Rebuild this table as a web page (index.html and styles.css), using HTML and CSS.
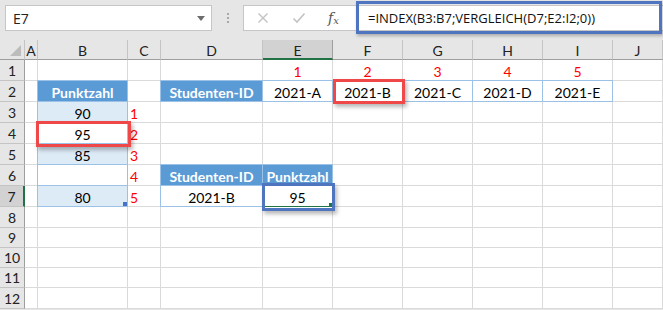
FILE: index.html
```html
<!DOCTYPE html>
<html lang="de">
<head>
<meta charset="utf-8">
<title>Mappe1 - Excel</title>
<link rel="stylesheet" href="styles.css">
</head>
<body>
<div class="app">
  <div class="toolbar">
    <div class="namebox">
      <span class="name">E7</span>
      <span class="caret"></span>
    </div>
    <div class="grip"><i></i><i></i><i></i></div>
    <div class="fxbox">
      <svg class="ico" width="12" height="12" viewBox="0 0 12 12"><path d="M1.5 1.5L10.5 10.5M10.5 1.5L1.5 10.5" stroke="#c2c2c2" stroke-width="1.4" fill="none"/></svg>
      <svg class="ico" width="14" height="12" viewBox="0 0 14 12"><path d="M1.5 6.5L5 10L12.5 1.5" stroke="#c2c2c2" stroke-width="1.6" fill="none"/></svg>
      <span class="fx">f<sub>x</sub></span>
    </div>
    <div class="formula">=INDEX(B3:B7;VERGLEICH(D7;E2:I2;0))</div>
    <div class="hl-formula"></div>
  </div>

  <div class="sheet">
    <!-- column headings -->
    <div class="corner"><span class="tri"></span></div>
    <div class="ch">A</div><div class="ch">B</div><div class="ch">C</div><div class="ch">D</div>
    <div class="ch sel">E</div><div class="ch">F</div><div class="ch">G</div><div class="ch">H</div><div class="ch">I</div><div class="ch">J</div>

    <!-- row 1: position numbers above the ID row -->
    <div class="rh">1</div>
    <div class="c"></div><div class="c"></div><div class="c"></div><div class="c"></div>
    <div class="c pos">1</div><div class="c pos">2</div><div class="c pos">3</div><div class="c pos">4</div><div class="c pos">5</div><div class="c"></div>

    <!-- row 2 -->
    <div class="rh">2</div>
    <div class="c"></div>
    <div class="c t hd">Punktzahl</div>
    <div class="c"></div>
    <div class="c t hd">Studenten-ID</div>
    <div class="c t">2021-A</div><div class="c t">2021-B</div><div class="c t">2021-C</div><div class="c t">2021-D</div><div class="c t">2021-E</div>
    <div class="c"></div>

    <!-- row 3 -->
    <div class="rh">3</div>
    <div class="c"></div><div class="c t band">90</div><div class="c idx">1</div>
    <div class="c"></div><div class="c"></div><div class="c"></div><div class="c"></div><div class="c"></div><div class="c"></div><div class="c"></div>

    <!-- row 4 -->
    <div class="rh">4</div>
    <div class="c"></div><div class="c t">95</div><div class="c idx">2</div>
    <div class="c"></div><div class="c"></div><div class="c"></div><div class="c"></div><div class="c"></div><div class="c"></div><div class="c"></div>

    <!-- row 5 -->
    <div class="rh">5</div>
    <div class="c"></div><div class="c t band">85</div><div class="c idx">3</div>
    <div class="c"></div><div class="c"></div><div class="c"></div><div class="c"></div><div class="c"></div><div class="c"></div><div class="c"></div>

    <!-- row 6 -->
    <div class="rh">6</div>
    <div class="c"></div><div class="c t"></div><div class="c idx">4</div>
    <div class="c t hd">Studenten-ID</div><div class="c t hd">Punktzahl</div>
    <div class="c"></div><div class="c"></div><div class="c"></div><div class="c"></div><div class="c"></div>

    <!-- row 7 -->
    <div class="rh sel">7</div>
    <div class="c"></div><div class="c t band end">80</div><div class="c idx">5</div>
    <div class="c t">2021-B</div><div class="c t active">95</div>
    <div class="c"></div><div class="c"></div><div class="c"></div><div class="c"></div><div class="c"></div>

    <!-- rows 8-12 -->
    <div class="rh">8</div>
    <div class="c"></div><div class="c"></div><div class="c"></div><div class="c"></div><div class="c"></div><div class="c"></div><div class="c"></div><div class="c"></div><div class="c"></div><div class="c"></div>
    <div class="rh">9</div>
    <div class="c"></div><div class="c"></div><div class="c"></div><div class="c"></div><div class="c"></div><div class="c"></div><div class="c"></div><div class="c"></div><div class="c"></div><div class="c"></div>
    <div class="rh">10</div>
    <div class="c"></div><div class="c"></div><div class="c"></div><div class="c"></div><div class="c"></div><div class="c"></div><div class="c"></div><div class="c"></div><div class="c"></div><div class="c"></div>
    <div class="rh">11</div>
    <div class="c"></div><div class="c"></div><div class="c"></div><div class="c"></div><div class="c"></div><div class="c"></div><div class="c"></div><div class="c"></div><div class="c"></div><div class="c"></div>
    <div class="rh">12</div>
    <div class="c"></div><div class="c"></div><div class="c"></div><div class="c"></div><div class="c"></div><div class="c"></div><div class="c"></div><div class="c"></div><div class="c"></div><div class="c"></div>

    <!-- highlight frames drawn over the grid -->
    <div class="mark red m-b4"></div>
    <div class="mark red m-f2"></div>
    <div class="mark blue m-e7"></div>
  </div>
</div>
</body>
</html>
```

FILE: styles.css
```css
* { box-sizing: border-box; }

html, body {
  margin: 0;
  padding: 0;
  background: #e6e6e6;
}

.app {
  width: 663px;
  height: 310px;
  overflow: hidden;
  font-family: Lato, "Liberation Sans", sans-serif;
  color: #000;
}

/* ---------- formula bar ---------- */
.toolbar {
  position: relative;
  height: 40px;
  display: flex;
  align-items: flex-start;
  padding: 5px 0 0 5px;
  background: #e6e6e6;
}

.namebox {
  width: 207px;
  height: 26px;
  background: #fff;
  border: 1px solid #c6c6c6;
  display: flex;
  align-items: center;
  justify-content: space-between;
  padding: 0 6px 0 7px;
  font-family: "Open Sans", sans-serif;
  font-size: 14px;
  color: #222;
}

.caret {
  width: 0;
  height: 0;
  border-left: 4px solid transparent;
  border-right: 4px solid transparent;
  border-top: 5px solid #6d6d6d;
}

.grip {
  width: 31px;
  height: 26px;
  display: flex;
  flex-direction: column;
  align-items: center;
  justify-content: center;
  gap: 2px;
}
.grip i {
  display: block;
  width: 2px;
  height: 2px;
  background: #a8a8a8;
}

.fxbox {
  width: 114px;
  height: 26px;
  background: #fff;
  border: 1px solid #c6c6c6;
  display: flex;
  align-items: center;
  padding-left: 13px;
}
.fxbox .ico { flex: none; }
.fxbox .ico + .ico { margin-left: 23px; }

.fx {
  margin-left: 22px;
  font-family: "DejaVu Serif", "Liberation Serif", serif;
  font-style: italic;
  font-size: 14px;
  color: #555;
  line-height: 1;
}
.fx sub {
  font-size: 10px;
  vertical-align: -1px;
}

.formula {
  flex: 1;
  height: 26px;
  background: #fff;
  border-top: 1px solid #c6c6c6;
  border-bottom: 1px solid #c6c6c6;
  padding-left: 11px;
  display: flex;
  align-items: center;
  font-family: "Open Sans", sans-serif;
  font-size: 13px;
  color: #111;
  white-space: nowrap;
}

.hl-formula {
  position: absolute;
  left: 356px;
  top: 1px;
  width: 306px;
  height: 33px;
  border: 3px solid #4f74c0;
  box-shadow: 1px 2px 3px rgba(0, 0, 0, 0.25);
}

/* ---------- worksheet grid ---------- */
.sheet {
  position: relative;
  display: grid;
  grid-template-columns: 25px 13px 90px 33px 102px 70px 70px 70px 70px 70px 1fr;
  grid-template-rows: 20px 21px 21px 21px 21px 21px 21px 21px 21px 20px 20px 20px 21px;
  background: #fff;
  font-size: 14px;
}

.corner {
  position: relative;
  background: #e6e6e6;
  border-right: 1px solid #c4c4c4;
  border-bottom: 1px solid #9e9e9e;
}
.corner .tri {
  position: absolute;
  right: 3px;
  bottom: 3px;
  width: 0;
  height: 0;
  border-left: 11px solid transparent;
  border-bottom: 11px solid #bcbcbc;
}

.ch {
  background: #e6e6e6;
  border-right: 1px solid #c4c4c4;
  border-bottom: 1px solid #9e9e9e;
  display: flex;
  align-items: center;
  justify-content: center;
  padding-top: 2px;
  font-size: 14px;
  color: #222;
}
.ch.sel {
  background: #d2d2d2;
  border-bottom: 2px solid #217346;
  border-right-color: #9e9e9e;
}

.rh {
  background: #e6e6e6;
  border-right: 1px solid #9e9e9e;
  border-bottom: 1px solid #c4c4c4;
  display: flex;
  align-items: center;
  justify-content: center;
  font-size: 14px;
  color: #222;
}
.rh.sel {
  background: #d2d2d2;
  border-right: 2px solid #217346;
}

.c {
  border-right: 1px solid #dadada;
  border-bottom: 1px solid #dadada;
  display: flex;
  align-items: flex-end;
  justify-content: center;
  line-height: 17px;
  white-space: nowrap;
}

/* table cells: light blue rules drawn over the plain grid lines */
.c.t {
  position: relative;
  z-index: 1;
  margin: -1px 0 0 -1px;
  border: 1px solid #9bc2e6;
  background: #fff;
}
.c.band { background: #ddebf7; }
.c.hd {
  background: #5b9bd5;
  color: #fff;
  font-weight: 700;
}

.c.end::after {
  content: "";
  position: absolute;
  right: 0;
  bottom: 0;
  width: 4px;
  height: 4px;
  background: #4472c4;
}

.c.active {
  border: 1px solid #217346;
}
.c.active::after {
  content: "";
  position: absolute;
  right: -1px;
  bottom: -1px;
  width: 4px;
  height: 4px;
  background: #217346;
}

.c.pos,
.c.idx {
  color: #ff0000;
}
.c.idx {
  justify-content: flex-start;
  padding-left: 2px;
}

/* ---------- highlight frames ---------- */
.mark {
  position: absolute;
  z-index: 5;
  border: 3px solid;
  box-shadow: 2px 3px 4px rgba(0, 0, 0, 0.28);
  pointer-events: none;
}
.mark.red { border-color: #f04848; }
.mark.blue { border-color: #4f74c0; }

.m-b4 { left: 36px; top: 81px; width: 95px; height: 26px; }
.m-f2 { left: 333px; top: 39px; width: 72px; height: 25px; }
.m-e7 { left: 262px; top: 143px; width: 73px; height: 28px; }
```
